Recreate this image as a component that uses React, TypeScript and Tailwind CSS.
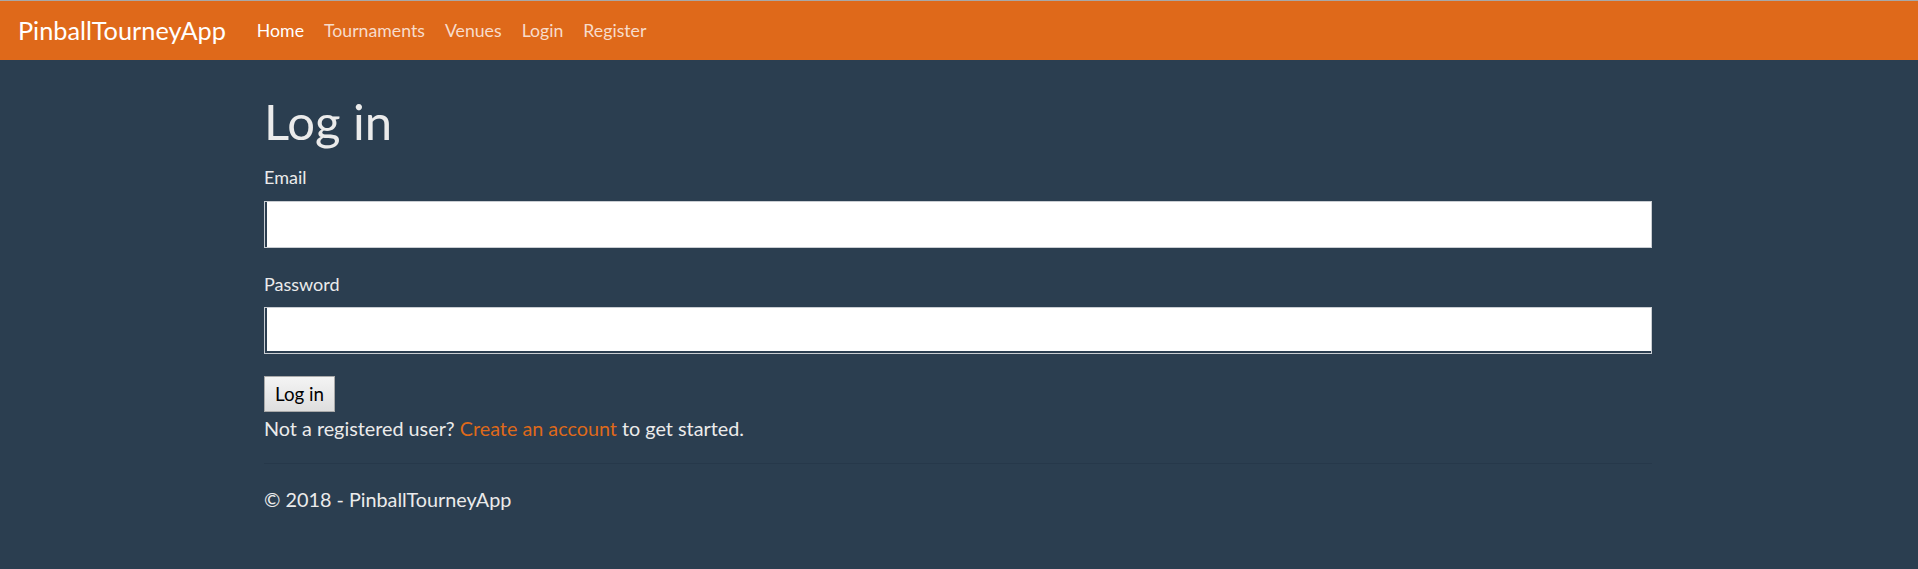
import React from 'react';

const navLinks = [
  { label: 'Home', active: true },
  { label: 'Tournaments', active: false },
  { label: 'Venues', active: false },
  { label: 'Login', active: false },
  { label: 'Register', active: false },
];

const App: React.FC = () => {
  return (
    <div className="min-h-[569px] bg-[#2b3e50] text-[#ebebeb] font-['Lato','Liberation_Sans',sans-serif]">
      <nav className="h-[60px] bg-[#df691a] border-t border-[#a8a8a8] flex items-center pl-[18px]">
        <a href="#" className="text-[25.3px] text-white leading-none mr-[31px]">
          PinballTourneyApp
        </a>
        <ul className="flex items-center gap-[20px]">
          {navLinks.map((link) => (
            <li key={link.label}>
              <a
                href="#"
                className={
                  link.active
                    ? 'text-[17.7px] leading-none text-white'
                    : 'text-[17.7px] leading-none text-[#f7dccb]'
                }
              >
                {link.label}
              </a>
            </li>
          ))}
        </ul>
      </nav>

      <main className="ml-[264px] w-[1388px]">
        <h1 className="text-[49px] leading-[1.1] mt-[35px]">Log in</h1>

        <form className="flex flex-col" onSubmit={(e) => e.preventDefault()}>
          <label htmlFor="email" className="text-[18px] leading-[26.8px] mt-[15px]">
            Email
          </label>
          <input
            id="email"
            type="email"
            className="mt-[10px] h-[47px] w-full bg-white border border-[#c9cdd2] shadow-[inset_2px_0_0_#2b3e50] outline-none"
          />

          <label htmlFor="password" className="text-[18px] leading-[26.8px] mt-[23px]">
            Password
          </label>
          <input
            id="password"
            type="password"
            className="mt-[10px] h-[47px] w-full bg-white border border-[#c9cdd2] shadow-[inset_2px_-2px_0_#2b3e50] outline-none"
          />

          <div className="mt-[22px]">
            <button
              type="submit"
              className="h-[36px] px-[10px] text-[18.75px] leading-none text-black border border-[#a9a9a9] bg-gradient-to-b from-[#f4f4f4] to-[#dedede]"
            >
              Log in
            </button>
          </div>
        </form>

        <p className="text-[19.8px] leading-[26.8px] mt-[3px]">
          Not a registered user?{' '}
          <a href="#" className="text-[#df691a]">
            Create an account
          </a>{' '}
          to get started.
        </p>

        <hr className="mt-[21px] border-0 border-t border-[#26384a]" />

        <footer className="mt-[22px] text-[19.8px] leading-[26.8px]">
          <p>&copy; 2018 - PinballTourneyApp</p>
        </footer>
      </main>
    </div>
  );
};

export default App;
